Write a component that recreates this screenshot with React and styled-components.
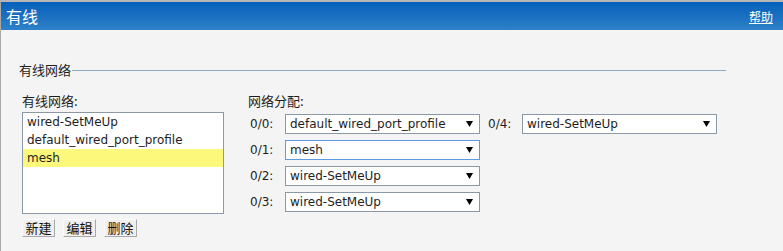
import React from 'react'
import styled, { createGlobalStyle } from 'styled-components'

const GlobalStyle = createGlobalStyle`
  html, body {
    margin: 0;
    padding: 0;
    background: #f4f4f4;
  }
  body {
    font-family: "DejaVu Sans", "Noto Sans CJK SC", sans-serif;
    font-size: 12px;
    color: #1e1e1e;
  }
`

const Page = styled.div`
  height: 251px;
  box-sizing: border-box;
  border-top: 2px solid #b6b6b6;
  border-left: 1px solid #a9a9a9;
  background: #f4f4f4;
`

const Header = styled.header`
  height: 28px;
  display: flex;
  align-items: center;
  justify-content: space-between;
  padding: 0 10px 0 5px;
  background: linear-gradient(to bottom, #0660bb 0%, #1a6fc0 50%, #2e81c9 100%);
  color: #fff;
`

const Title = styled.h1`
  margin: 0;
  font-family: "Noto Sans CJK SC", sans-serif;
  font-size: 16px;
  font-weight: normal;
`

const HelpLink = styled.a`
  color: #fff;
  font-family: "Noto Sans CJK SC", sans-serif;
  font-size: 12px;
  text-decoration: underline;
  cursor: pointer;
`

const Content = styled.div`
  padding: 32px 57px 0 18px;
`

const Section = styled.div`
  display: flex;
  align-items: center;
  height: 16px;
`

const SectionTitle = styled.span`
  font-family: "Noto Sans CJK SC", sans-serif;
  font-size: 13px;
  line-height: 16px;
  padding-right: 1px;
`

const Rule = styled.div`
  flex: 1;
  height: 1px;
  background: #8ea7c0;
`

const Columns = styled.div`
  display: flex;
  gap: 24px;
  margin-top: 15px;
  padding-left: 3px;
`

const Column = styled.div`
  display: flex;
  flex-direction: column;
  width: ${p => p.$width || 'auto'};
`

const Label = styled.div`
  font-family: "Noto Sans CJK SC", sans-serif;
  font-size: 13px;
  line-height: 16px;
`

const ListBox = styled.ul`
  list-style: none;
  margin: 3px 0 0;
  padding: 0;
  height: 100px;
  background: #fff;
  border: 1px solid #8b98a5;
`

const ListItem = styled.li`
  height: 18px;
  line-height: 18px;
  padding-left: 4px;
  background: ${p => (p.$selected ? '#fcf87b' : 'transparent')};
  white-space: nowrap;
`

const ButtonRow = styled.div`
  display: flex;
  gap: 8px;
  margin-top: 5px;
`

const Button = styled.button`
  width: 33px;
  height: 18px;
  padding: 0;
  font-family: "Noto Sans CJK SC", sans-serif;
  font-size: 13px;
  line-height: 14px;
  color: #111;
  background: #efefef;
  border: 1px solid;
  border-color: #fafafa #a8a8a8 #a8a8a8 #fafafa;
`

const PortGrid = styled.div`
  display: grid;
  grid-template-columns: 27px 195px 26px 195px;
  column-gap: 8px;
  row-gap: 6px;
  margin-top: 5px;
  padding-left: 2px;
  align-items: center;
`

const PortLabel = styled.span`
  line-height: 20px;
  white-space: nowrap;
`

const SelectWrap = styled.div`
  position: relative;
  height: 20px;
`

const Select = styled.select`
  appearance: none;
  width: 100%;
  height: 20px;
  box-sizing: border-box;
  margin: 0;
  padding: 0 0 0 4px;
  font-family: "DejaVu Sans", sans-serif;
  font-size: 12px;
  color: #1e1e1e;
  background: #fff;
  border: 1px solid ${p => (p.$focused ? '#5f9ae0' : '#8b98a5')};
  border-radius: 0;
  outline: none;
`

const Arrow = styled.svg`
  position: absolute;
  right: 7px;
  top: 7px;
  pointer-events: none;
`

const profiles = ['wired-SetMeUp', 'default_wired_port_profile', 'mesh']

// grid runs in rows of two pairs; null leaves the second pair empty
const ports = [
  { id: '0/0', value: 'default_wired_port_profile' },
  { id: '0/4', value: 'wired-SetMeUp' },
  { id: '0/1', value: 'mesh', focused: true },
  null,
  { id: '0/2', value: 'wired-SetMeUp' },
  null,
  { id: '0/3', value: 'wired-SetMeUp' },
  null
]

function PortSelect ({ value, focused }) {
  return (
    <SelectWrap>
      <Select $focused={focused} defaultValue={value}>
        {profiles.map(p => <option key={p} value={p}>{p}</option>)}
      </Select>
      <Arrow width="7" height="6" viewBox="0 0 7 6">
        <polygon points="0,0 7,0 3.5,6" fill="#000" />
      </Arrow>
    </SelectWrap>
  )
}

export default function App () {
  return (
    <Page>
      <GlobalStyle />
      <Header>
        <Title>有线</Title>
        <HelpLink>帮助</HelpLink>
      </Header>
      <Content>
        <Section>
          <SectionTitle>有线网络</SectionTitle>
          <Rule />
        </Section>
        <Columns>
          <Column $width="202px">
            <Label>有线网络:</Label>
            <ListBox>
              {profiles.map(p => (
                <ListItem key={p} $selected={p === 'mesh'}>{p}</ListItem>
              ))}
            </ListBox>
            <ButtonRow>
              <Button>新建</Button>
              <Button>编辑</Button>
              <Button>删除</Button>
            </ButtonRow>
          </Column>
          <Column>
            <Label>网络分配:</Label>
            <PortGrid>
              {ports.map((port, i) => port
                ? [
                    <PortLabel key={port.id + 'l'}>{port.id}:</PortLabel>,
                    <PortSelect key={port.id} value={port.value} focused={port.focused} />
                  ]
                : [<span key={'e' + i} />, <span key={'f' + i} />]
              )}
            </PortGrid>
          </Column>
        </Columns>
      </Content>
    </Page>
  )
}
